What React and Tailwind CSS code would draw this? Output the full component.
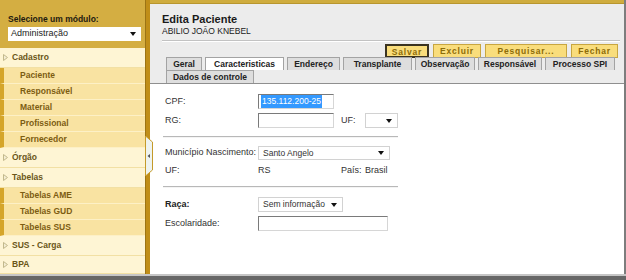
import React from 'react'

function Arrow() {
  return (
    <svg width="5" height="7" viewBox="0 0 5 7" className="shrink-0">
      <path d="M0.5 0.5 L4.5 3.5 L0.5 6.5 Z" fill="#f4edd2" stroke="#c2b98c" strokeWidth="1" />
    </svg>
  )
}

function Caret() {
  return (
    <svg width="6" height="4" viewBox="0 0 6 4" className="shrink-0">
      <path d="M0 0 L6 0 L3 4 Z" fill="#111" />
    </svg>
  )
}

function MenuHeader({ label, grow }) {
  return (
    <div className={`${grow ? 'flex-1' : 'h-[20px]'} flex items-center gap-[4px] pl-[3px] bg-[#fef5d4] border-b border-[#f2e0a4] text-[8.5px] font-bold text-[#6a5618]`}>
      <Arrow />
      <span>{label}</span>
    </div>
  )
}

function SubItem({ label }) {
  return (
    <div className="h-[16px] flex items-center pl-[16px] border-l-[4px] border-l-[#d5a52a] border-b border-b-[#fdf0c6] bg-[#f9e3a2] text-[8.5px] font-bold text-[#7d5d12]">
      {label}
    </div>
  )
}

function Sidebar() {
  return (
    <div className="w-[145px] flex flex-col">
      <div className="h-[48px] bg-[#d4ae42] pl-[8px] pr-[4px] pt-[14px]">
        <div className="text-[8.5px] leading-[11px] font-bold text-[#1e1a10]">Selecione um módulo:</div>
        <div className="mt-[2px] h-[14px] bg-white flex items-center justify-between pl-[3px] pr-[5px] text-[9px] text-[#222]">
          <span>Administração</span>
          <Caret />
        </div>
      </div>
      <MenuHeader label="Cadastro" />
      <SubItem label="Paciente" />
      <SubItem label="Responsável" />
      <SubItem label="Material" />
      <SubItem label="Profissional" />
      <SubItem label="Fornecedor" />
      <MenuHeader label="Órgão" />
      <MenuHeader label="Tabelas" />
      <SubItem label="Tabelas AME" />
      <SubItem label="Tabelas GUD" />
      <SubItem label="Tabelas SUS" />
      <MenuHeader label="SUS - Carga" />
      <MenuHeader label="BPA" grow />
    </div>
  )
}

function Splitter() {
  return (
    <div className="w-[5px] relative bg-[#c08e18] border-l border-[#9c7414]">
      <svg width="9" height="40" viewBox="0 0 9 40" className="absolute top-[136px] left-[-1px] z-10">
        <path d="M0.5 0 L7.5 6 L7.5 34 L0.5 40 Z" fill="#eef3ef" stroke="#c49a2a" strokeWidth="1" />
        <path d="M5 18 L2.5 20 L5 22 Z" fill="#555" />
      </svg>
    </div>
  )
}

const buttons = [
  { label: 'Salvar', w: 'w-[44px]', focus: true },
  { label: 'Excluir', w: 'w-[48px]' },
  { label: 'Pesquisar...', w: 'w-[82px]' },
  { label: 'Fechar', w: 'w-[47px]' },
]

const tabs = [
  { label: 'Geral', w: 'w-[36px]' },
  { label: 'Caracteristicas', w: 'w-[79px]', active: true },
  { label: 'Endereço', w: 'w-[53px]' },
  { label: 'Transplante', w: 'w-[69px]' },
  { label: 'Observação', w: 'w-[60px]' },
  { label: 'Responsável', w: 'w-[64px]' },
  { label: 'Processo SPI', w: 'w-[70px]' },
]

function Tab({ label, w, active }) {
  return (
    <div className={`${w} h-[13px] flex items-center justify-center border border-b-0 border-[#a3a3a3] text-[8.5px] font-bold text-[#222] ${active ? 'bg-white' : 'bg-[#dedede]'}`}>
      {label}
    </div>
  )
}

function Header() {
  return (
    <div className="bg-[#ececec] pl-[12px] pr-[4px] pt-[9px] border-b border-[#8f8f8f]">
      <div className="text-[11px] leading-[13px] font-bold text-[#1a1a1a]">Edita Paciente</div>
      <div className="text-[8.5px] leading-[10px] text-[#1a1a1a]">ABILIO JOÃO KNEBEL</div>
      <div className="mt-[4px] h-[2px] border-t border-[#c2c2c2] border-b border-b-white" />
      <div className="mt-[2px] mr-[2px] flex justify-end gap-[4px]">
        {buttons.map((b) => (
          <div
            key={b.label}
            className={`${b.w} h-[14px] flex justify-center pt-[1px] bg-[#f9dd7c] text-[8.5px] leading-[10px] font-bold tracking-[0.8px] text-[#8d6c08] ${b.focus ? 'border-2 border-[#3a3320]' : 'border border-[#c8a640]'}`}
          >
            {b.label}
          </div>
        ))}
      </div>
      <div className="relative z-10 mt-[-1px] ml-[4px] flex gap-[3px]">
        {tabs.map((t) => (
          <Tab key={t.label} {...t} />
        ))}
      </div>
      <div className="relative z-10 ml-[4px] flex">
        <Tab label="Dados de controle" w="w-[88px]" />
      </div>
    </div>
  )
}

function Input({ w, children }) {
  return (
    <div className={`${w} h-[15px] bg-white border border-t-[#7a7a7a] border-l-[#7a7a7a] border-r-[#d6d6d6] border-b-[#d6d6d6] flex items-center pl-[2px] text-[8.5px] text-[#222]`}>
      {children}
    </div>
  )
}

function Select({ w, h = 'h-[15px]', children }) {
  return (
    <div className={`${w} ${h} bg-white border border-[#d2d2d2] flex items-center justify-between pl-[4px] pr-[5px] text-[8.5px] text-[#333]`}>
      <span>{children}</span>
      <Caret />
    </div>
  )
}

function Label({ children, bold }) {
  return (
    <div className={`w-[93px] shrink-0 text-[9px] ${bold ? 'font-bold text-[#222]' : 'text-[#333]'}`}>{children}</div>
  )
}

function Form() {
  return (
    <div className="flex-1 bg-white pl-[15px] pt-[10px]">
      <div className="flex items-center">
        <Label>CPF:</Label>
        <Input w="w-[76px]">
          <span className="bg-[#3399ff] text-white px-[1px]">135.112.200-25</span>
        </Input>
      </div>
      <div className="mt-[4px] flex items-center">
        <Label>RG:</Label>
        <Input w="w-[76px]" />
        <div className="ml-[7px] w-[24px] text-[9px] text-[#333]">UF:</div>
        <Select w="w-[33px]" />
      </div>
      <div className="mt-[8px] ml-[-2px] w-[235px] h-[2px] border-t border-[#b8b8b8] border-b border-b-[#f4f4f4]" />
      <div className="mt-[8px] flex items-center">
        <Label>Município Nascimento:</Label>
        <Select w="w-[132px]" h="h-[14px]">Santo Angelo</Select>
      </div>
      <div className="mt-[4px] h-[14px] flex items-center text-[9px] text-[#333]">
        <Label>UF:</Label>
        <div className="w-[83px]">RS</div>
        <div className="w-[24px]">País:</div>
        <div>Brasil</div>
      </div>
      <div className="mt-[8px] ml-[-2px] w-[235px] h-[2px] border-t border-[#b8b8b8] border-b border-b-[#f4f4f4]" />
      <div className="mt-[9px] flex items-center">
        <Label bold>Raça:</Label>
        <Select w="w-[85px]">Sem informação</Select>
      </div>
      <div className="mt-[4px] flex items-center">
        <Label>Escolaridade:</Label>
        <Input w="w-[130px]" />
      </div>
    </div>
  )
}

export default function App() {
  return (
    <div className="w-[626px] h-[280px] flex flex-col overflow-hidden bg-white font-['Liberation_Sans',Arial,sans-serif]">
      <div className="flex-1 flex min-h-0">
        <Sidebar />
        <Splitter />
        <div className="flex-1 flex flex-col border-r-2 border-[#7d7d7d]">
          <div className="h-[4px] bg-[#cfac3e] border-b border-[#b8962e]" />
          <Header />
          <Form />
        </div>
      </div>
      <div className="h-[6px] border-t-2 border-[#c6c6c6] bg-[#676767]" />
    </div>
  )
}
